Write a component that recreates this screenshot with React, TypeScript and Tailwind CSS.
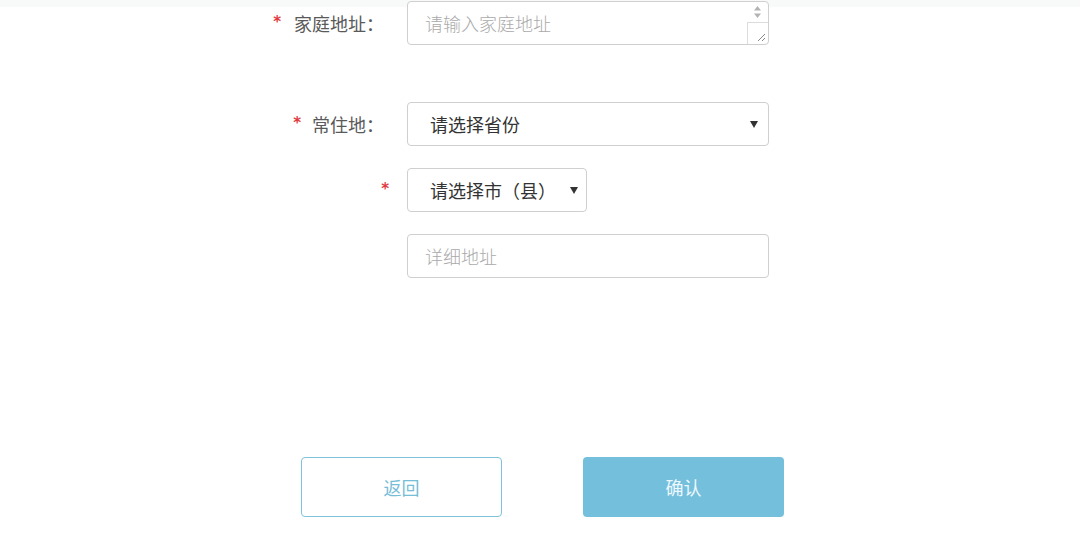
import React from "react";

const Star = ({ className = "" }: { className?: string }) => (
  <span
    className={`text-[#df3a3f] text-[15px] leading-none font-bold font-['DejaVu_Sans',sans-serif] ${className}`}
  >
    *
  </span>
);

const Arrow = () => (
  <svg width="8" height="7" viewBox="0 0 8 7" className="shrink-0">
    <path d="M0 0 H8 L4 7 Z" fill="#333" />
  </svg>
);

export default function App() {
  return (
    <div className="w-[1080px] h-[557px] bg-[linear-gradient(#f8f9f9_0px,#f8f9f9_7px,#ffffff_7px)] font-['Noto_Sans_CJK_SC','Noto_Sans',sans-serif] text-[18px] overflow-hidden">
      <div className="pt-px">
        {/* Row 1: 家庭地址 */}
        <div className="flex items-center h-[44px]">
          <div className="w-[384px] flex justify-end items-center text-[#5a5a5a]">
            <Star className="mr-[13px] -mt-[2px]" />
            <span>家庭地址：</span>
          </div>
          <div className="relative ml-[23px] w-[362px] h-[44px] border border-[#cfcfcf] rounded-[4px] bg-white flex items-center pl-[17px]">
            <span className="text-[#aaa] font-light">请输入家庭地址</span>
            <div className="absolute right-0 top-0 bottom-0 w-[21px] flex flex-col">
              <div className="h-[20px] flex items-center justify-center">
                <svg width="9" height="14" viewBox="0 0 9 14">
                  <path d="M4.5 1 L8 5.5 H1 Z" fill="#b3b3b3" />
                  <path d="M4.5 13 L8 8.5 H1 Z" fill="#b3b3b3" />
                </svg>
              </div>
              <div className="flex-1 border-l border-t border-[#dcdcdc] relative">
                <svg width="10" height="10" viewBox="0 0 10 10" className="absolute right-[2px] bottom-[2px]">
                  <path d="M9 2 L2 9" stroke="#888" strokeWidth="1" />
                  <path d="M9 6 L6 9" stroke="#888" strokeWidth="1" />
                </svg>
              </div>
            </div>
          </div>
        </div>

        {/* Row 2: 常住地 */}
        <div className="flex items-center h-[44px] mt-[57px]">
          <div className="w-[384px] flex justify-end items-center text-[#5a5a5a]">
            <Star className="mr-[11px] -mt-[2px]" />
            <span>常住地：</span>
          </div>
          <div className="ml-[23px] w-[362px] h-[44px] border border-[#cfcfcf] rounded-[4px] bg-white flex items-center justify-between pl-[22px] pr-[10px]">
            <span className="text-[#333]">请选择省份</span>
            <Arrow />
          </div>
        </div>

        {/* Row 3: city */}
        <div className="flex items-center h-[44px] mt-[22px]">
          <div className="w-[384px] flex justify-end items-center">
            <Star className="-mr-[5px] -mt-[2px]" />
          </div>
          <div className="ml-[23px] w-[180px] h-[44px] border border-[#cfcfcf] rounded-[4px] bg-white flex items-center justify-between pl-[22px] pr-[8px]">
            <span className="text-[#333]">请选择市（县）</span>
            <Arrow />
          </div>
        </div>

        {/* Row 4: detail */}
        <div className="flex items-center h-[44px] mt-[22px]">
          <div className="w-[384px]" />
          <div className="ml-[23px] w-[362px] h-[44px] border border-[#cfcfcf] rounded-[4px] bg-white flex items-center pl-[17px]">
            <span className="text-[#aaa] font-light">详细地址</span>
          </div>
        </div>

        {/* Buttons */}
        <div className="flex mt-[179px] ml-[301px] gap-[81px]">
          <button className="w-[201px] h-[60px] rounded-[4px] border-[1.5px] border-[#7fc2db] bg-white text-[#76bdd8] text-[18px]">
            返回
          </button>
          <button className="w-[201px] h-[60px] rounded-[4px] bg-[#74bfdc] text-[#eef8fc] text-[18px]">
            确认
          </button>
        </div>
      </div>
    </div>
  );
}
